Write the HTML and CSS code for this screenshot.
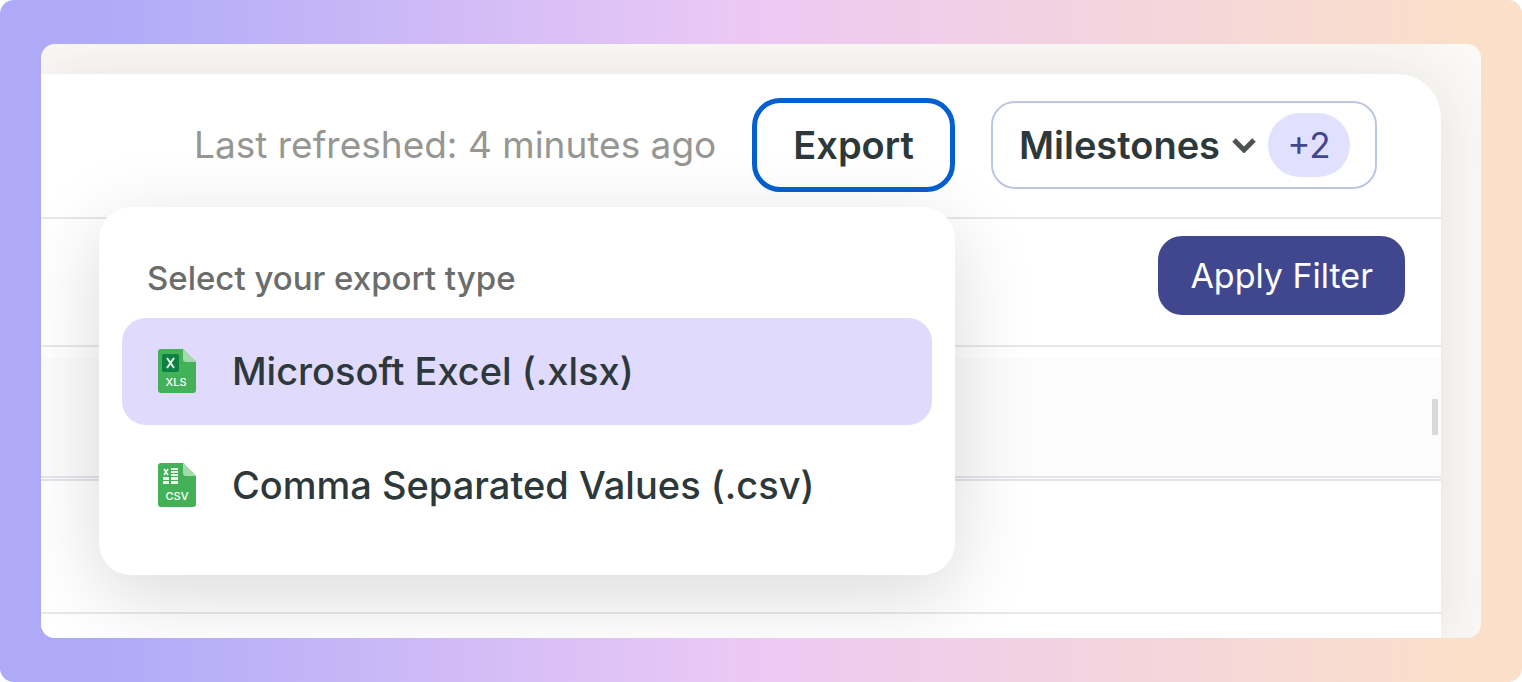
FILE: index.html
```html
<!DOCTYPE html>
<html lang="en">
  <head>
    <meta charset="UTF-8" />
    <meta name="viewport" content="width=device-width, initial-scale=1.0" />
    <title>Export</title>
    <link rel="stylesheet" href="styles.css">
  </head>
  <body>
    <main class="stage">
      <div class="window">
        <div class="panel">
          <header class="toolbar">
            <span class="refreshed">Last refreshed: 4 minutes ago</span>

            <div class="export">
              <button class="export-button" type="button" aria-haspopup="menu" aria-expanded="true">Export</button>

              <div class="export-menu">
                <h2 class="menu-title" id="menu-title">Select your export type</h2>
                <div class="menu-list" role="menu" aria-labelledby="menu-title">
                  <button class="menu-item active" type="button" role="menuitem">
                    <svg class="file-icon" viewBox="0 0 38 44" aria-hidden="true">
                      <path fill="#43b157" d="M3 0h22l13 13v28a3 3 0 0 1-3 3H3a3 3 0 0 1-3-3V3a3 3 0 0 1 3-3z" />
                      <path fill="#a4dbac" d="M25 0l13 13H28a3 3 0 0 1-3-3z" />
                      <rect x="4" y="5" width="17" height="18" rx="2" fill="#0f8043" />
                      <path fill="none" stroke="#e6f5ea" stroke-width="2" d="M9 9l7 10M16 9l-7 10" />
                      <text class="file-ext" x="18" y="37" text-anchor="middle">XLS</text>
                    </svg>
                    Microsoft Excel (.xlsx)
                  </button>
                  <button class="menu-item" type="button" role="menuitem">
                    <svg class="file-icon" viewBox="0 0 38 44" aria-hidden="true">
                      <path fill="#43b157" d="M3 0h22l13 13v28a3 3 0 0 1-3 3H3a3 3 0 0 1-3-3V3a3 3 0 0 1 3-3z" />
                      <path fill="#a4dbac" d="M25 0l13 13H28a3 3 0 0 1-3-3z" />
                      <path fill="none" stroke="#fff" stroke-width="1.5" d="M6 6l4 6M10 6l-4 6" />
                      <path fill="#fff" fill-opacity=".9" d="M13 5h7v2h-7zM13 8h7v2h-7zM13 11h7v2h-7zM5 14h6v3H5zM13 14h7v3h-7zM5 18h6v3H5zM13 18h7v3h-7z" />
                      <text class="file-ext" x="19" y="37" text-anchor="middle">CSV</text>
                    </svg>
                    Comma Separated Values (.csv)
                  </button>
                </div>
              </div>
            </div>

            <button class="milestones" type="button">
              Milestones
              <svg class="chevron" viewBox="0 0 24 16" aria-hidden="true">
                <path d="M2 3l10 10L22 3" />
              </svg>
              <span class="count">+2</span>
            </button>
          </header>

          <div class="filters">
            <button class="apply" type="button">Apply Filter</button>
          </div>

          <div class="column-head">
            <span class="resize-handle"></span>
          </div>
          <div class="row"></div>
        </div>
      </div>
    </main>
  </body>
</html>
```
FILE: styles.css
```css
* {
  box-sizing: border-box;
}
body {
  margin: 0;
  font-family: Inter, "Liberation Sans", sans-serif;
  font-optical-sizing: none;
  color: #2d383a;
}
button {
  font: inherit;
  color: inherit;
  cursor: pointer;
}
.stage {
  display: flex;
  min-height: 100vh;
  padding: 44px 41px;
  border-radius: 14px;
  background: linear-gradient(90deg, #aeaaf8 6%, #ebc8f5 48%, #fbdfc9 96%);
}
.window {
  flex: 1;
  display: flex;
  padding: 30px 40px 0 0;
  border-radius: 14px;
  overflow: hidden;
  background: #faf9f6;
}
.panel {
  flex: 1;
  display: flex;
  flex-direction: column;
  border-top-right-radius: 44px;
  background: #fff;
  box-shadow: 0 4px 64px rgba(60, 55, 40, 0.12);
}
.toolbar {
  display: flex;
  align-items: center;
  justify-content: flex-end;
  gap: 36px;
  height: 145px;
  padding: 0 64px 2px 0;
  border-bottom: 2px solid #e8e8e8;
}
.refreshed {
  font-size: 37px;
  color: #969693;
}
.export {
  position: relative;
}
.export-button {
  display: block;
  height: 94px;
  padding: 0 36px;
  border: 5px solid #0460d1;
  border-radius: 28px;
  background: #fff;
  font-size: 38px;
  font-weight: 600;
}
.export-menu {
  position: absolute;
  top: calc(100% + 15px);
  right: 0;
  width: 856px;
  padding: 47px 23px 36px;
  border-radius: 32px;
  background: #fff;
  box-shadow: 0 20px 80px rgba(0, 0, 0, 0.15);
}
.menu-title {
  margin: 0 0 16px;
  padding-left: 25px;
  font-size: 33px;
  font-weight: 500;
  line-height: 48px;
  color: #6b6d6d;
}
.menu-list {
  display: flex;
  flex-direction: column;
  gap: 7px;
}
.menu-item {
  display: flex;
  align-items: center;
  gap: 36px;
  height: 107px;
  padding: 0 36px;
  border: 0;
  border-radius: 24px;
  background: none;
  font-size: 38px;
  font-weight: 500;
  text-align: left;
}
.menu-item.active,
.menu-item:hover {
  background: #e0dafd;
}
.file-icon {
  width: 38px;
  height: 44px;
}
.file-ext {
  font-size: 11px;
  font-weight: 500;
  fill: #fff;
}
.milestones {
  display: flex;
  align-items: center;
  height: 88px;
  padding: 0 25px 0 26px;
  border: 2px solid #bcc5e3;
  border-radius: 24px;
  background: #fff;
  font-size: 38px;
  font-weight: 600;
}
.chevron {
  width: 24px;
  height: 16px;
  margin: 0 12px;
  fill: none;
  stroke: #4d5253;
  stroke-width: 5;
}
.count {
  min-width: 82px;
  border-radius: 32px;
  background: #e1e1ff;
  font-size: 35px;
  font-weight: 400;
  line-height: 64px;
  color: #40478f;
}
.filters {
  display: flex;
  align-items: flex-start;
  justify-content: flex-end;
  height: 128px;
  padding: 17px 36px 0;
  border-bottom: 2px solid #e8e8e8;
}
.apply {
  height: 79px;
  padding: 0 32px;
  border: 0;
  border-radius: 24px;
  background: #40478f;
  font-size: 34px;
  color: #fff;
}
.column-head {
  display: flex;
  align-items: center;
  justify-content: flex-end;
  height: 123px;
  margin-top: 11px;
  padding-right: 3px;
  border-bottom: 5px double #e4e5ea;
  background: #fcfcfc;
}
.resize-handle {
  width: 6px;
  height: 36px;
  background: #d8d9da;
}
.row {
  height: 133px;
  border-bottom: 2px solid #e8e8e8;
}
```
